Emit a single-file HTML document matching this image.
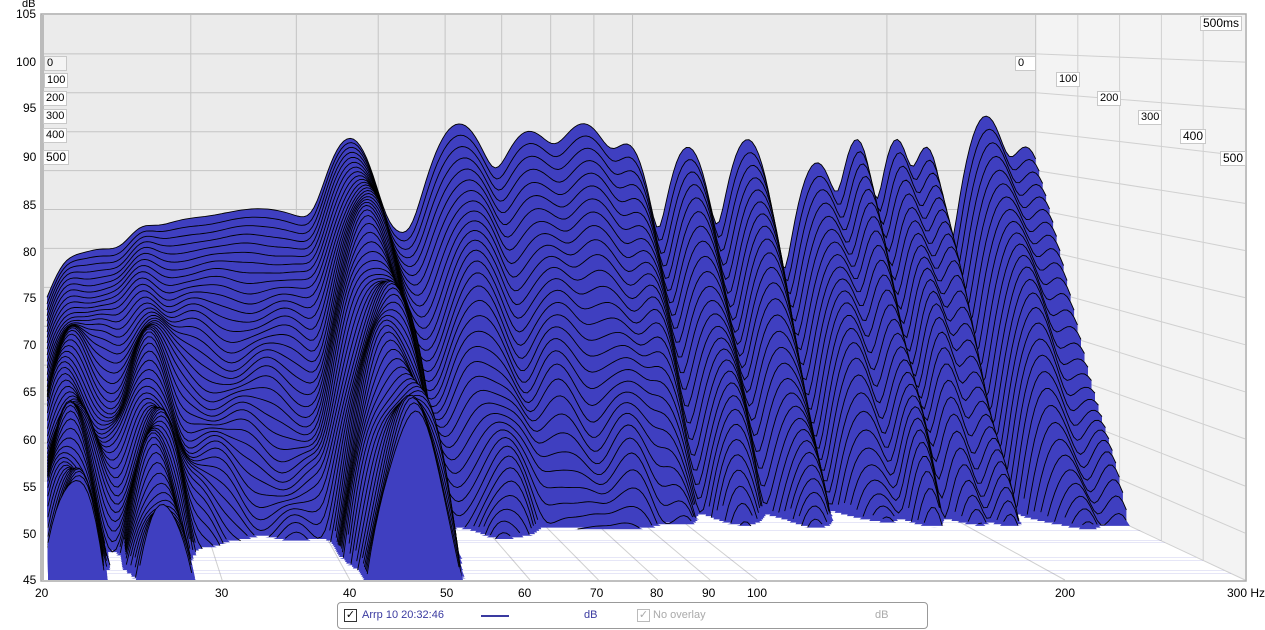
<!DOCTYPE html>
<html><head><meta charset="utf-8">
<style>
html,body{margin:0;padding:0;background:#fff;width:1265px;height:630px;overflow:hidden;font-family:"Liberation Sans",sans-serif;}
.lbl{position:absolute;font-size:12px;color:#000;white-space:nowrap;}
.box{position:absolute;font-size:11px;background:#fff;border:1px solid #c8c8c8;padding:0 2px;line-height:13px;z-index:2}
#leg{position:absolute;left:337px;top:602px;width:589px;height:25px;border:1px solid #999;border-radius:4px;font-size:11px;}
svg{position:absolute;left:0;top:0}
</style></head><body>
<svg id="s" xmlns="http://www.w3.org/2000/svg" width="1265" height="630"></svg>
<div class="lbl" style="left:22px;top:-2px;font-size:11px">dB</div>
<div class="lbl" style="left:16px;top:7px">105</div>
<div class="lbl" style="left:16px;top:55px">100</div>
<div class="lbl" style="left:23px;top:101px">95</div>
<div class="lbl" style="left:23px;top:150px">90</div>
<div class="lbl" style="left:23px;top:198px">85</div>
<div class="lbl" style="left:23px;top:245px">80</div>
<div class="lbl" style="left:23px;top:291px">75</div>
<div class="lbl" style="left:23px;top:338px">70</div>
<div class="lbl" style="left:23px;top:385px">65</div>
<div class="lbl" style="left:23px;top:433px">60</div>
<div class="lbl" style="left:23px;top:480px">55</div>
<div class="lbl" style="left:23px;top:527px">50</div>
<div class="lbl" style="left:23px;top:573px">45</div>
<div class="lbl" style="left:35px;top:586px">20</div>
<div class="lbl" style="left:215px;top:586px">30</div>
<div class="lbl" style="left:343px;top:586px">40</div>
<div class="lbl" style="left:440px;top:586px">50</div>
<div class="lbl" style="left:518px;top:586px">60</div>
<div class="lbl" style="left:590px;top:586px">70</div>
<div class="lbl" style="left:650px;top:586px">80</div>
<div class="lbl" style="left:702px;top:586px">90</div>
<div class="lbl" style="left:747px;top:586px">100</div>
<div class="lbl" style="left:1055px;top:586px">200</div>
<div class="lbl" style="left:1227px;top:586px">300 Hz</div>
<div class="box" style="left:44px;top:56px;width:17px;background:#f4f4f4">0</div>
<div class="box" style="left:44px;top:73px">100</div>
<div class="box" style="left:43px;top:91px">200</div>
<div class="box" style="left:43px;top:109px">300</div>
<div class="box" style="left:43px;top:128px">400</div>
<div class="box" style="left:43px;top:150px;font-size:12px">500</div>
<div class="box" style="left:1015px;top:56px;width:15px">0</div>
<div class="box" style="left:1056px;top:72px">100</div>
<div class="box" style="left:1097px;top:91px">200</div>
<div class="box" style="left:1138px;top:110px">300</div>
<div class="box" style="left:1180px;top:129px;font-size:12px">400</div>
<div class="box" style="left:1220px;top:151px;font-size:12px">500</div>
<div class="box" style="left:1200px;top:16px;font-size:12px">500ms</div>
<div id="leg">
 <div style="position:absolute;left:6px;top:6px;width:11px;height:11px;border:1px solid #333;font-size:11px;line-height:11px;text-align:center">✓</div>
 <div style="position:absolute;left:24px;top:6px;color:#3a3aa0">Arrp 10 20:32:46</div>
 <div style="position:absolute;left:143px;top:12px;width:28px;height:2px;background:#3a3aa0"></div>
 <div style="position:absolute;left:246px;top:6px;color:#3a3aa0">dB</div>
 <div style="position:absolute;left:299px;top:6px;width:11px;height:11px;border:1px solid #bbb;font-size:11px;line-height:11px;text-align:center;color:#aaa">✓</div>
 <div style="position:absolute;left:315px;top:6px;color:#aaa">No overlay</div>
 <div style="position:absolute;left:537px;top:6px;color:#aaa">dB</div>
</div>
<script>
(function(){
var NS="http://www.w3.org/2000/svg";
var root=document.getElementById('s');
function el(t,a){var e=document.createElementNS(NS,t);for(var k in a){e.setAttribute(k,a[k]);}root.appendChild(e);return e;}
var X0=42,Y0=15,WF=1203,HF=565,SB=0.826;
function xo(u,s){return X0+u*WF*s;}
function yo(v,s){return Y0+(105-v)*9.42*s;}
el('rect',{x:42,y:15,width:1203,height:565,fill:'#f4f4f4'});
el('polygon',{points:'42,15 1036,15 1036,482 42,482',fill:'#ebebeb'});
el('polygon',{points:'1036,15 1245,15 1245,580 1036,482',fill:'#f3f3f3'});
el('polygon',{points:'42,482 1036,482 1245,580 42,580',fill:'#ffffff'});
var fr=[20,30,40,50,60,70,80,90,100,200,300];
for(var a=0;a<fr.length;a++){var u=Math.log(fr[a]/20)/Math.log(15);var xb=xo(u,SB),xf=xo(u,1);
 el('line',{x1:xb,y1:15,x2:xb,y2:482,stroke:'#c4c4c4'});
 el('line',{x1:xb,y1:482,x2:xf,y2:580,stroke:'#d0d0d0'});}
for(var v=50;v<=100;v+=5){var yb=yo(v,SB),yf=yo(v,1);
 el('line',{x1:42,y1:yb,x2:1036,y2:yb,stroke:'#c4c4c4'});
 el('line',{x1:1036,y1:yb,x2:1245,y2:yf,stroke:'#d0d0d0'});}
for(var i=1;i<5;i++){var x=1036+i*209/5;el('line',{x1:x,y1:15,x2:x,y2:482+98*i/5,stroke:'#d0d0d0'});}
var P=[[0.025,69,0.02,14],[0.10,73,0.02,20],[0.22,80,0.09,60],[0.13,76,0.05,45],[0.055,74,0.04,40],[0.31,89,0.025,28],[0.355,76,0.03,60],
[0.42,91,0.03,80],[0.49,90,0.03,90],[0.545,91,0.03,95],[0.59,88,0.02,95],[0.65,88,0.02,95],[0.71,89,0.02,95],
[0.78,86,0.02,95],[0.82,89,0.015,95],[0.86,89,0.015,95],[0.89,88,0.015,95],[0.95,92,0.02,95],[0.99,88,0.02,95]];
function lev(u,d){var e=Math.pow(10,(64-80*d-6*u)/10);
 for(var i=0;i<P.length;i++){var p=P[i];var z=(u-p[0])/p[2];e+=Math.pow(10,(p[1]-p[3]*d-6*z*z)/10);}
 var r=10*Math.log(e)/Math.LN10;
 r+=1.5*Math.sin(u*70+d*18)*Math.min(1,d*3)+0.8*Math.sin(u*140-d*30)*d;
 return r;}
var N=60;
for(var k=0;k<=N;k++){var d=k/N,s=SB+(1-SB)*d,fy=Y0+HF*s;
 var top=[],runs=[],cur=null;
 for(var j=0;j<=300;j++){var uu=0.005+j/300*0.995;var L=lev(uu,d);var xx=xo(uu,s);var yy=L>45?yo(L,s):fy;if(yy>fy)yy=fy;
  var pt=xx.toFixed(1)+','+yy.toFixed(1);top.push(pt);
  if(L>45){if(!cur){cur=[];runs.push(cur);}cur.push(pt);}else cur=null;}
 if(runs.length==0)continue;
 var xs=xo(0.005,s),xe=xo(1,s);
 el('polygon',{points:xs.toFixed(1)+','+fy+' '+top.join(' ')+' '+xe.toFixed(1)+','+fy,fill:'#3f3fc0'});
 for(var r=0;r<runs.length;r++){if(runs[r].length>1)el('polyline',{points:runs[r].join(' '),fill:'none',stroke:'#000','stroke-width':0.9});}}
el('rect',{x:41,y:14,width:1205,height:567,fill:'none',stroke:'#aaa','stroke-width':1.5});
el('rect',{x:40,y:15,width:4,height:565,fill:'#bbb'});
})();
</script>
</body></html>
